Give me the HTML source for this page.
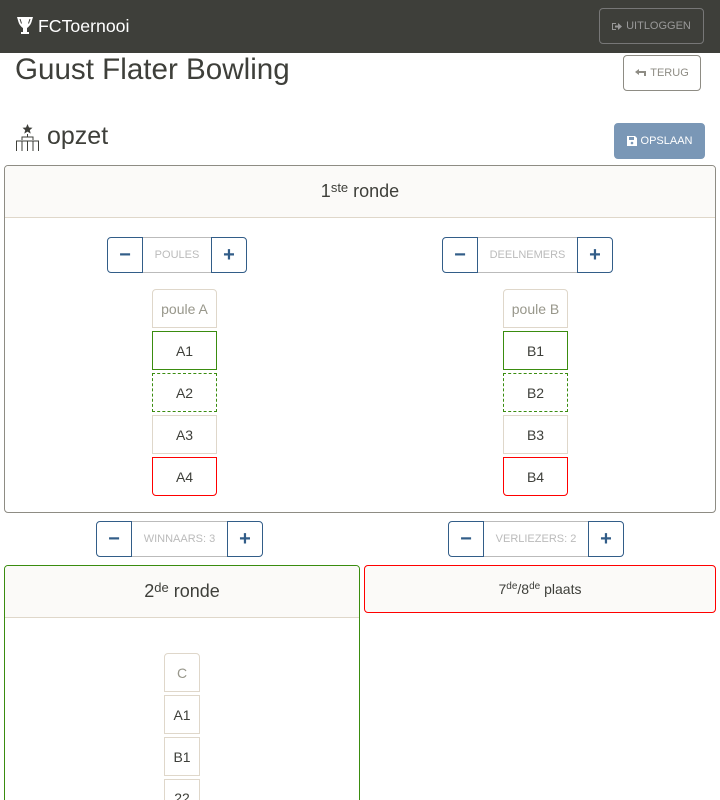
<!DOCTYPE html>
<html style="height:800px;overflow:hidden"><head><meta charset="utf-8"><style>
*{box-sizing:border-box;margin:0;padding:0}
body{width:720px;height:800px;overflow:hidden;background:#fff;font-family:"Liberation Sans",sans-serif;color:#3e3f3a;position:relative}
.a{position:absolute}
.nav{left:0;top:0;width:720px;height:53px;background:#3e3f3a}
.btn{position:absolute;border:1px solid;border-radius:4px;font-size:11px;display:flex;align-items:center;justify-content:center;gap:4px}
.card{position:absolute;border:1px solid #8e8c84;border-radius:4px;overflow:hidden}
.hd{height:52px;background:#fbfaf8;border-bottom:1px solid #dfd7ca;display:flex;align-items:center;justify-content:center;font-size:18px}
sup{font-size:13px;vertical-align:top;position:relative;top:-4px}
.grp{position:absolute;height:36px;display:flex}
.grp div{height:36px;display:flex;align-items:center;justify-content:center}
.pm{width:36px;border:1px solid #325d88;color:#325d88;font-size:20px;font-weight:bold}
.m{border-radius:4px 0 0 4px}.p{border-radius:0 4px 4px 0}
.lb{border-top:1px solid #bbb;border-bottom:1px solid #bbb;color:#bbb;font-size:11px}
.bx{position:absolute;height:39px;border:1px solid #dfd7ca;display:flex;align-items:center;justify-content:center;font-size:14px}
.g{border-color:#3a8c0f}.d{border:1px dashed #3a8c0f}.r{border-color:#f00;border-radius:0 0 4px 4px}
.ph{color:#98978b;border-radius:4px 4px 0 0}
</style></head><body>
<div class="a nav"></div>
<svg class="a" style="left:16px;top:16px" width="18" height="20" viewBox="0 0 18 20"><path d="M1 1h16l-1.5 5C14.5 9 12.5 11 11 12v4h2v2H5v-2h2v-4C5.5 11 3.5 9 2.5 6z" fill="#fff"/><path d="M4 3l1.5 4.5M14 3l-1.5 4.5" stroke="#3e3f3a" stroke-width="1"/></svg>
<div class="a" style="left:38px;top:16px;font-size:17.7px;color:#fff">FCToernooi</div>
<div class="btn" style="left:599px;top:8px;width:105px;height:36px;border-color:#777;color:#999">
<svg width="10" height="9" viewBox="0 0 10 9"><path d="M0 1h4v1H1v5h3v1H0z M3 3.5h3V1l4 3.5-4 3.5V5.5H3z" fill="#999"/></svg>UITLOGGEN</div>
<div class="a" style="left:15px;top:53px;font-size:29.6px">Guust Flater Bowling</div>
<div class="btn" style="left:623px;top:55px;width:78px;height:36px;border-color:#8e8c84;color:#8e8c84">
<svg width="11" height="8" viewBox="0 0 11 8"><path d="M0 3l4-3v2h7v5H9V4H4v2z" fill="#8e8c84"/></svg>TERUG</div>
<svg class="a" style="left:16px;top:124px" width="24" height="27" viewBox="0 0 24 27"><path d="M11.5 0l1.5 3.5 3.5.3-2.7 2.3.9 3.5-3.2-2-3.2 2 .9-3.5L6.5 3.8l3.5-.3z" fill="#3e3f3a"/><path d="M11.5 10v3M6 16v-3h11v3M0.5 27v-10h11v10M6 17v0M11.5 27v-10h11v10M6 17v10M17 17v10M0.5 17h22" stroke="#3e3f3a" stroke-width="1" fill="none"/></svg>
<div class="a" style="left:47px;top:122px;font-size:25px">opzet</div>
<div class="btn" style="left:614px;top:123px;width:91px;height:36px;background:#7a97b6;border-color:#7a97b6;color:#fff">
<svg width="10" height="10" viewBox="0 0 10 10"><path d="M0 0h8l2 2v8H0z" fill="#fff"/><rect x="2" y="1" width="5" height="3" fill="#7a97b6"/><circle cx="5" cy="7" r="1.3" fill="#7a97b6"/></svg>OPSLAAN</div>

<div class="card" style="left:4px;top:165px;width:712px;height:348px"><div class="hd">1<sup>ste</sup>&nbsp;ronde</div></div>
<div class="grp" style="left:107px;top:237px"><div class="pm m">−</div><div class="lb" style="width:68px">POULES</div><div class="pm p">+</div></div>
<div class="grp" style="left:442px;top:237px"><div class="pm m">−</div><div class="lb" style="width:99px">DEELNEMERS</div><div class="pm p">+</div></div>
<div class="bx ph" style="left:152px;top:289px;width:65px">poule A</div>
<div class="bx g" style="left:152px;top:331px;width:65px">A1</div>
<div class="bx d" style="left:152px;top:373px;width:65px">A2</div>
<div class="bx" style="left:152px;top:415px;width:65px">A3</div>
<div class="bx r" style="left:152px;top:457px;width:65px">A4</div>
<div class="bx ph" style="left:503px;top:289px;width:65px">poule B</div>
<div class="bx g" style="left:503px;top:331px;width:65px">B1</div>
<div class="bx d" style="left:503px;top:373px;width:65px">B2</div>
<div class="bx" style="left:503px;top:415px;width:65px">B3</div>
<div class="bx r" style="left:503px;top:457px;width:65px">B4</div>

<div class="grp" style="left:96px;top:521px"><div class="pm m">−</div><div class="lb" style="width:95px">WINNAARS: 3</div><div class="pm p">+</div></div>
<div class="grp" style="left:448px;top:521px"><div class="pm m">−</div><div class="lb" style="width:104px">VERLIEZERS: 2</div><div class="pm p">+</div></div>

<div class="card" style="left:4px;top:565px;width:356px;height:300px;border-color:#3a8c0f"><div class="hd">2<sup>de</sup>&nbsp;ronde</div></div>
<div class="bx ph" style="left:164px;top:653px;width:36px">C</div>
<div class="bx" style="left:164px;top:695px;width:36px">A1</div>
<div class="bx" style="left:164px;top:737px;width:36px">B1</div>
<div class="bx" style="left:164px;top:779px;width:36px;align-items:flex-start;padding-top:10px">22</div>

<div class="card" style="left:364px;top:565px;width:352px;height:48px;border-color:#f00;background:#fbfaf8;display:flex;align-items:center;justify-content:center;font-size:14px">7<sup style="font-size:10px;top:-3px">de</sup>/8<sup style="font-size:10px;top:-3px">de</sup>&nbsp;plaats</div>
</body></html>
